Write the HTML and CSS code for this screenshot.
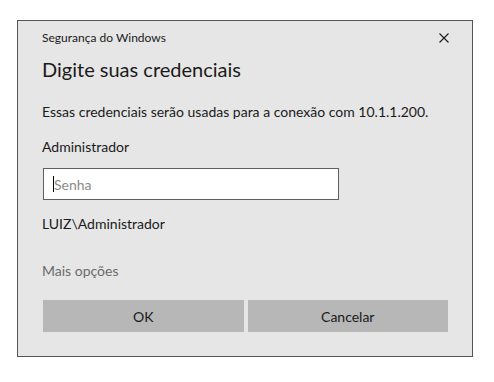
FILE: index.html
```html
<!DOCTYPE html>
<html lang="pt-BR">
  <head>
    <meta charset="UTF-8" />
    <title>Segurança do Windows</title>
    <link rel="stylesheet" href="styles.css">
  </head>
  <body>
    <div class="dialog">
      <div class="dialog-header">
        <span class="dialog-caption">Segurança do Windows</span>
        <button class="close-btn" aria-label="Fechar">
          <svg width="10" height="10" viewBox="0 0 10 10">
            <path d="M0.5 0.5 L9.5 9.5 M9.5 0.5 L0.5 9.5" stroke="#1a1a1a" stroke-width="1.1" fill="none" />
          </svg>
        </button>
      </div>
      <h1 class="dialog-title">Digite suas credenciais</h1>
      <p class="dialog-text">Essas credenciais serão usadas para a conexão com 10.1.1.200.</p>
      <div class="user-name">Administrador</div>
      <div class="password-box">
        <span class="caret"></span>
        <span class="placeholder">Senha</span>
      </div>
      <div class="domain-user">LUIZ\Administrador</div>
      <div class="more-options">Mais opções</div>
      <div class="button-row">
        <button class="dlg-btn">OK</button>
        <button class="dlg-btn">Cancelar</button>
      </div>
    </div>
  </body>
</html>
```

FILE: styles.css
```css
body {
  margin: 0;
  background: #fff;
  font-family: Lato, "Noto Sans", sans-serif;
  color: #1a1a1a;
}
.dialog {
  box-sizing: border-box;
  width: 456px;
  margin: 20px 0 0 17px;
  padding: 7px 24px 24px 24px;
  background: #e6e6e6;
  border: 1px solid #555;
  display: flex;
  flex-direction: column;
  white-space: nowrap;
}
.dialog-header {
  display: flex;
  justify-content: space-between;
  align-items: center;
  height: 20px;
}
.dialog-caption {
  font-size: 12px;
  line-height: 20px;
}
.close-btn {
  background: none;
  border: none;
  padding: 0;
  margin-right: -1px;
  width: 10px;
  height: 10px;
  display: flex;
}
.dialog-title {
  margin: 7px 0 0 0;
  font-size: 20px;
  font-weight: 400;
  line-height: 28px;
}
.dialog-text {
  margin: 19px 0 0 0;
  font-size: 14px;
  line-height: 20px;
}
.user-name {
  margin-top: 15px;
  font-size: 14px;
  line-height: 20px;
}
.password-box {
  box-sizing: border-box;
  margin-top: 11px;
  margin-left: 1px;
  width: 296px;
  height: 32px;
  background: #fff;
  border: 1px solid #5f5f5f;
  display: flex;
  align-items: center;
  padding-left: 9px;
}
.caret {
  width: 1px;
  height: 16px;
  background: #000;
}
.placeholder {
  font-size: 14px;
  color: #8a8a8a;
}
.domain-user {
  margin-top: 14px;
  font-size: 14px;
  line-height: 20px;
}
.more-options {
  margin-top: 27px;
  font-size: 14px;
  line-height: 20px;
  color: #6b6b6b;
}
.button-row {
  margin-top: 19px;
  margin-left: 1px;
  display: flex;
  gap: 4px;
}
.dlg-btn {
  width: 201px;
  height: 32px;
  border: none;
  background: #b7b7b7;
  font-family: inherit;
  font-size: 14px;
  color: #1a1a1a;
  padding: 0;
}
```
